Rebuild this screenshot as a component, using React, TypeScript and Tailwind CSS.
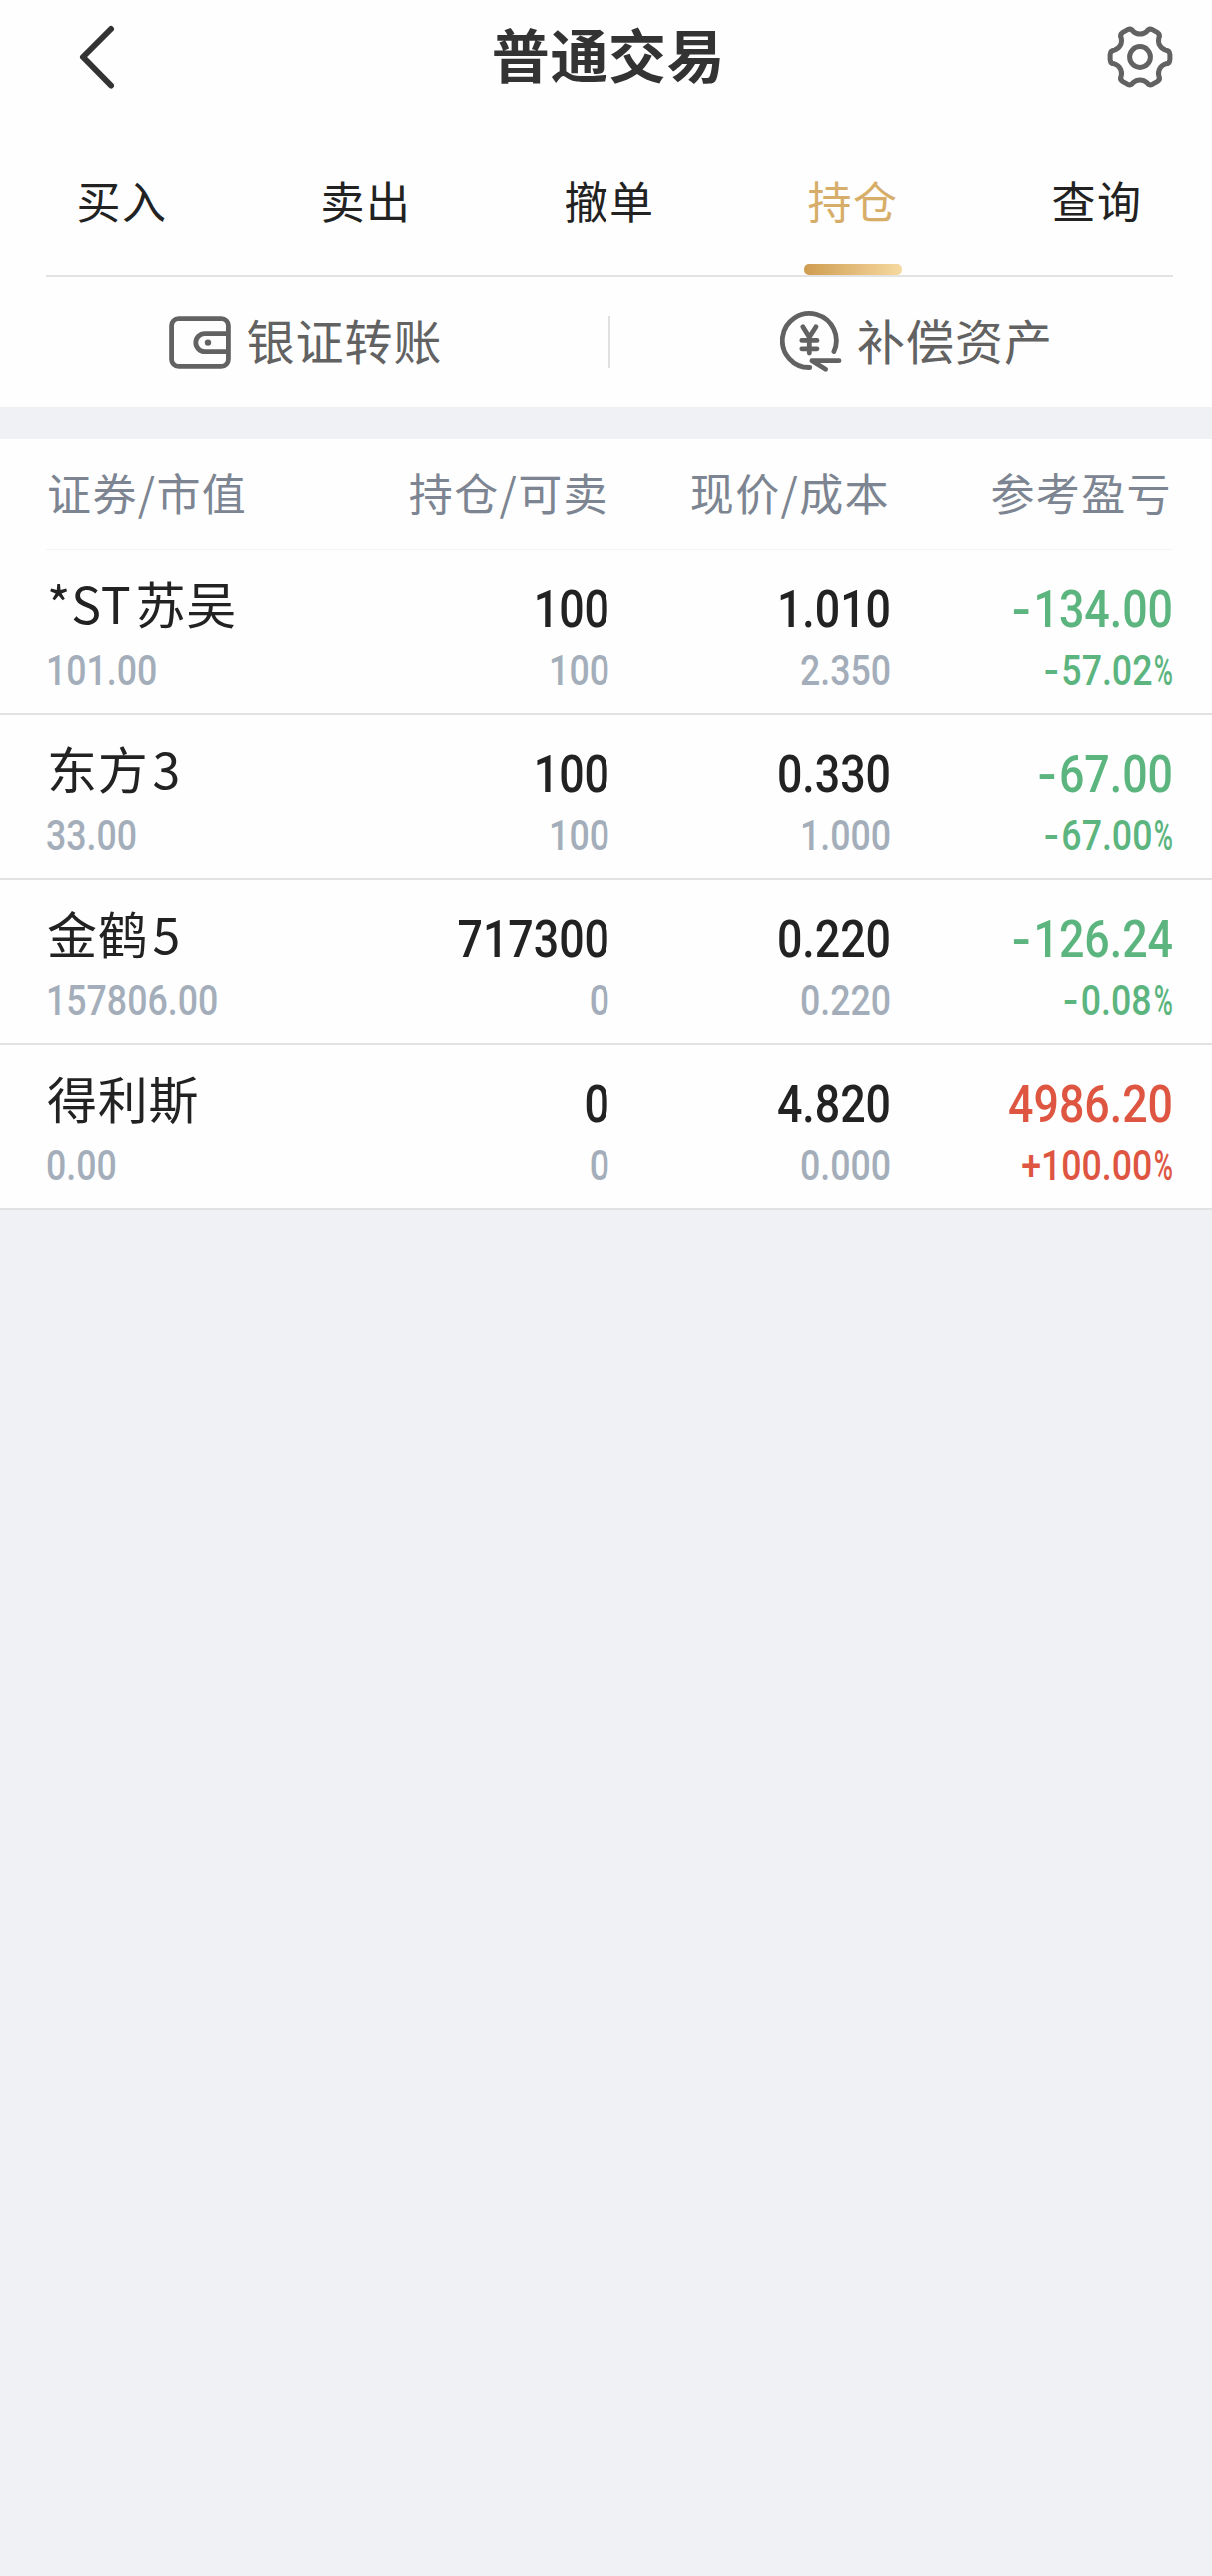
import { useState } from 'react';

const tabs = ['买入', '卖出', '撤单', '持仓', '查询'];

const columns = ['证券/市值', '持仓/可卖', '现价/成本', '参考盈亏'];

const holdings = [
    { name: ['*ST', '苏吴'], value: '101.00', amount: '100', sellable: '100', price: '1.010', cost: '2.350', profit: '-134.00', rate: '-57.02', up: false },
    { name: ['东方', '3'], value: '33.00', amount: '100', sellable: '100', price: '0.330', cost: '1.000', profit: '-67.00', rate: '-67.00', up: false },
    { name: ['金鹤', '5'], value: '157806.00', amount: '717300', sellable: '0', price: '0.220', cost: '0.220', profit: '-126.24', rate: '-0.08', up: false },
    { name: ['得利斯'], value: '0.00', amount: '0', sellable: '0', price: '4.820', cost: '0.000', profit: '4986.20', rate: '+100.00', up: true },
];

const polar = (r: number, deg: number) => {
    const a = (deg * Math.PI) / 180;
    return `${(33 + r * Math.cos(a)).toFixed(2)} ${(33 + r * Math.sin(a)).toFixed(2)}`;
};

// six rounded teeth joined by shallow concave arcs
const gearPath =
    `M${polar(26.5, -15)}` +
    [0, 60, 120, 180, 240, 300]
        .map((a) => `Q${polar(30.4, a - 13)} ${polar(30, a - 5)}L${polar(30, a + 5)}Q${polar(30.4, a + 13)} ${polar(26.5, a + 15)}A10 10 0 0 0 ${polar(26.5, a + 45)}`)
        .join('') +
    'Z';

const GearIcon = () => (
    <svg width="66" height="66" viewBox="0 0 66 66" fill="none" stroke="#626262" strokeWidth="5" strokeLinejoin="round">
        <path d={gearPath} />
        <circle cx="33" cy="33" r="10.4" />
    </svg>
);

const WalletIcon = () => (
    <svg width="62" height="53" viewBox="0 0 62 53" fill="none" stroke="#626262" strokeWidth="4.8">
        <rect x="2.6" y="2.6" width="56.8" height="47.8" rx="7" />
        <path d="M59 17.6H35.8a9 9 0 0 0 0 18H59" />
        <circle cx="39" cy="26.6" r="3.2" fill="#626262" stroke="none" />
    </svg>
);

const YenIcon = () => (
    <svg width="62" height="62" viewBox="0 0 62 62" fill="none" stroke="#626262" strokeWidth="4.8" strokeLinecap="round" strokeLinejoin="round">
        <path d="M53.9 40.6A27 27 0 1 0 29.8 56.5" />
        <path d="M59 49.7H31.9L45.6 58.2" />
        <path d="M22.8 15.8L29.3 26.3L36 15.8M29.3 26.3V42M21.8 29.4H37M21.8 37.8H37" />
    </svg>
);

// a minus sign is drawn wider than the font's hyphen
const Signed = ({ text }: { text: string }) =>
    text.startsWith('-') ? (
        <>
            <span className="inline-block origin-right scale-x-125 mr-[3px]">-</span>
            {text.slice(1)}
        </>
    ) : (
        <>{text}</>
    );

// condensed figures used in the holdings table
const Num = ({ children }: { children: string }) => (
    <div className="font-['Roboto',sans-serif] font-medium text-[52px] leading-[56px] origin-right scale-x-[0.86]">
        <Signed text={children} />
    </div>
);

const SubNum = ({ children, left = false }: { children: string; left?: boolean }) => (
    <div
        className={`font-['Roboto',sans-serif] font-medium text-[42px] leading-[44px] scale-x-[0.85] text-[#a4aeba] ${left ? 'mt-[19px] origin-left' : 'mt-[11px] origin-right'}`}
    >
        {children}
    </div>
);

const App = () => {
    const [activeTab, setActiveTab] = useState(3);

    return (
        <div className="w-full min-h-[2579px] bg-[#f0f1f5] overflow-hidden font-['Noto_Sans_CJK_SC',sans-serif] text-[#222222]">
            <div className="bg-[#fefefe]">
                {/* Title bar */}
                <header className="h-[114px] flex items-center justify-between pl-[77px] pr-[39px]">
                    <button className="w-[66px]">
                        <svg width="40" height="66" viewBox="0 0 40 66" fill="none" stroke="#333333" strokeWidth="6" strokeLinecap="round" strokeLinejoin="round">
                            <path d="M34 5L6 33L34 61.5" />
                        </svg>
                    </button>
                    <h1 className="pb-[8px] pl-[5px] mr-[38px] text-[58px] leading-[70px] font-bold tracking-[0.6px] text-[#333333]">普通交易</h1>
                    <button>
                        <GearIcon />
                    </button>
                </header>

                {/* Tabs */}
                <nav className="relative flex h-[163px]">
                    {tabs.map((tab, idx) => (
                        <button
                            key={idx}
                            onClick={() => setActiveTab(idx)}
                            className={`w-[244px] shrink-0 flex flex-col items-center justify-between pt-[56px] pb-[2px] text-[44px] leading-[60px] tracking-[1.4px] ${activeTab === idx ? 'text-[#d6ae69]' : ''}`}
                        >
                            {tab}
                            {activeTab === idx && (
                                <span className="w-[98px] h-[11px] rounded-[5px] bg-gradient-to-r from-[#cf9d50] to-[#f6d9a0]" />
                            )}
                        </button>
                    ))}
                    <div className="absolute left-[46px] right-[39px] bottom-0 h-[2px] bg-[#e3e3e3]" />
                </nav>

                {/* Shortcuts */}
                <div className="flex items-center h-[130px] text-[48px] leading-[60px] tracking-[1px] text-[#626262]">
                    <button className="w-[609px] shrink-0 flex items-center justify-center gap-[15px] pl-[3px]">
                        <WalletIcon />
                        <span className="pb-[6px]">银证转账</span>
                    </button>
                    <div className="w-[2px] h-[52px] shrink-0 bg-[#e0e0e0]" />
                    <button className="w-[610px] shrink-0 flex items-center justify-center gap-[15px] pl-[3px]">
                        <YenIcon />
                        <span className="pb-[6px]">补偿资产</span>
                    </button>
                </div>
            </div>

            {/* Holdings */}
            <div className="mt-[33px] bg-[#fefefe]">
                <div className="ml-[46px] mr-[39px] h-[111px] grid grid-cols-4 items-center pb-[4px] border-b border-[#f4f4f4] text-[44px] leading-[60px] tracking-[1.4px] text-[#7c8591]">
                    {columns.map((col, idx) => (
                        <div key={idx} className={idx === 0 ? 'pl-px' : 'text-right pr-px'}>{col}</div>
                    ))}
                </div>

                {holdings.map((item, idx) => (
                    <div key={idx} className="h-[165px] pl-[46px] pr-[39px] grid grid-cols-4 border-b-2 border-[#e2e2e2]">
                        <div className="pt-6">
                            <div className="flex gap-[4px] pl-px text-[50px] leading-[56px] tracking-[0.8px]">
                                {item.name.map((part) => (
                                    <span key={part}>{part}</span>
                                ))}
                            </div>
                            <SubNum left>{item.value}</SubNum>
                        </div>
                        <div className="pt-8 text-right">
                            <Num>{item.amount}</Num>
                            <SubNum>{item.sellable}</SubNum>
                        </div>
                        <div className="pt-8 text-right">
                            <Num>{item.price}</Num>
                            <SubNum>{item.cost}</SubNum>
                        </div>
                        <div className={`pt-8 text-right ${item.up ? 'text-[#de5642]' : 'text-[#5cb57e]'}`}>
                            <Num>{item.profit}</Num>
                            <div className="mt-[11px] flex justify-end font-['Roboto',sans-serif] font-medium text-[42px] leading-[44px]">
                                <span className="origin-right scale-x-[0.85]">
                                    <Signed text={item.rate} />
                                </span>
                                <span className="w-[21px] flex justify-end">
                                    <span className="origin-right scale-x-[0.62]">%</span>
                                </span>
                            </div>
                        </div>
                    </div>
                ))}
            </div>
        </div>
    );
};

export default App;
